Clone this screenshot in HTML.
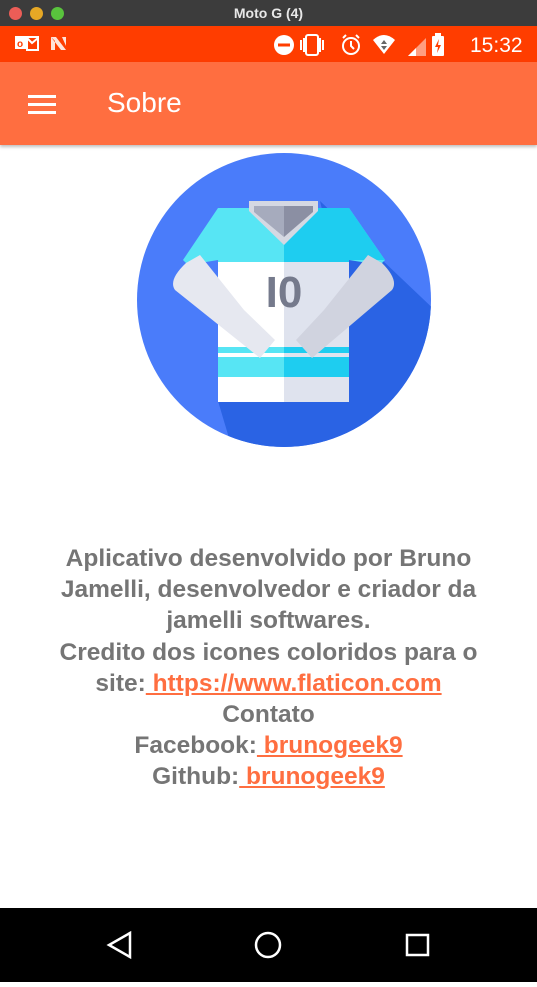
<!DOCTYPE html>
<html><head><meta charset="utf-8"><style>
*{margin:0;padding:0;box-sizing:border-box}
body{width:537px;height:982px;overflow:hidden;background:#fff;font-family:"Liberation Sans",sans-serif;position:relative}
.title{position:absolute;top:0;left:0;width:537px;height:26px;background:#3c3c3c;color:#e8e8e8;font-weight:bold;font-size:14px;text-align:center;line-height:26px}
.dot{position:absolute;top:7px;width:13px;height:13px;border-radius:50%}
.status{position:absolute;top:26px;left:0;width:537px;height:36px;background:#ff3d00;color:#fff}
.bar{position:absolute;top:62px;left:0;width:537px;height:83px;background:#ff6e40;box-shadow:0 2px 3px rgba(0,0,0,.25)}
.txt{position:absolute;top:543px;left:0;width:537px;text-align:center;font-weight:bold;font-size:24.5px;line-height:31.2px;color:#757575}
.txt a{color:#ff6e40;text-decoration:underline}
.nav{position:absolute;top:908px;left:0;width:537px;height:74px;background:#000}
</style></head><body>
<div class="title">Moto G (4)</div>
<div class="dot" style="left:9px;background:#ec5d57"></div>
<div class="dot" style="left:30px;background:#e6a825"></div>
<div class="dot" style="left:51px;background:#59c33d"></div>
<div class="status">
<svg width="537" height="36" style="position:absolute;left:0;top:0">
<rect x="15" y="10" width="12" height="13" fill="#fff"/><text x="17" y="21" font-size="10" font-weight="bold" fill="#ff3d00" font-family="Liberation Sans">o</text><path d="M27 11 L38 11 L38 24 L27 24 Z" fill="none" stroke="#fff" stroke-width="2"/><path d="M27 12 L32 17 L38 12" stroke="#fff" stroke-width="2" fill="none"/>
<path d="M51 11 L56 11 L66 24 L61 24 Z M51 11 L51 24 L55 24 L55 15 Z M62 11 L66 11 L66 20 Z" fill="#fff" opacity=".85"/>
<circle cx="284" cy="19" r="10" fill="#fff"/><rect x="278" y="17.5" width="12" height="3" fill="#ff3d00"/>
<rect x="306" y="9" width="12" height="20" rx="2" fill="none" stroke="#fff" stroke-width="2"/><path d="M301 14v10M304 12v14M320 12v14M323 14v10" stroke="#fff" stroke-width="2"/>
<circle cx="351" cy="20" r="8" fill="none" stroke="#fff" stroke-width="2"/><path d="M351 15v5l3 3M343 12l3-3M359 12l-3-3" stroke="#fff" stroke-width="2" fill="none"/>
<path d="M373 14 Q384 4 395 14 L384 28 Z" fill="#fff"/><path d="M381 18l3-4 3 4zM381 20h6l-3 4z" fill="#666"/>
<path d="M408 30 L426 12 L426 30 Z" fill="#fff" opacity=".5"/><path d="M408 30 L416 22 L416 30 Z" fill="#fff"/>
<rect x="432" y="10" width="12" height="20" rx="1" fill="#fff"/><rect x="435" y="7" width="6" height="3" fill="#fff"/><path d="M439 13 L435 21 L438 21 L437 27 L441 19 L438 19 Z" fill="#ff3d00"/>
<text x="470" y="26" font-size="21" fill="#fff" font-family="Liberation Sans">15:32</text>
</svg></div>
<div class="bar">
<div style="position:absolute;left:28px;top:33px;width:28px;height:3px;background:#fff"></div>
<div style="position:absolute;left:28px;top:41px;width:28px;height:3px;background:#fff"></div>
<div style="position:absolute;left:28px;top:49px;width:28px;height:3px;background:#fff"></div>
<div style="position:absolute;left:107px;top:25px;color:#fff;font-size:28px">Sobre</div>
</div>
<svg width="537" height="320" style="position:absolute;left:0;top:145px">
<defs><clipPath id="c"><circle cx="284" cy="155" r="147"/></clipPath></defs>
<circle cx="284" cy="155" r="147" fill="#4a7cfa"/>
<g clip-path="url(#c)"><path d="M320 56 L440 170 L440 330 L240 330 L218 256 L349 256 L349 180 Z" fill="#2a63e4"/></g>
<path d="M218 63 L349 63 L385 115 L380 120 L349 115 L349 257 L218 257 L218 115 L188 120 L183 115 Z" fill="#57e5f4"/>
<path d="M284 63 L349 63 L385 115 L349 115 L349 257 L284 257 Z" fill="#1ecdf0"/>
<rect x="218" y="117" width="66" height="140" fill="#fff"/><rect x="284" y="117" width="65" height="140" fill="#dfe3ee"/>
<rect x="218" y="202" width="131" height="6" fill="#57e5f4"/><rect x="218" y="212" width="131" height="20" fill="#57e5f4"/>
<rect x="284" y="202" width="65" height="6" fill="#1ecdf0"/><rect x="284" y="212" width="65" height="20" fill="#1ecdf0"/>
<path d="M249 56 L318 56 L318 66 L284 100 L249 66 Z" fill="#d5d8e2"/>
<path d="M254 61 L284 61 L284 92 L254 67 Z" fill="#a6abbd"/><path d="M284 61 L313 61 L313 67 L284 92 Z" fill="#8b8fa3"/>
<path d="M186 118 L200 110 L244 165 L275 195 L260 213 L175 145 Q168 135 186 118 Z" fill="#e6e8f0"/>
<path d="M382 118 L368 110 L324 165 L296 195 L312 213 L392 145 Q399 135 382 118 Z" fill="#d0d3df"/>
<text x="284" y="162" text-anchor="middle" font-size="44" font-weight="bold" fill="#757a8c" font-family="Liberation Sans">I0</text>
</svg>
<div class="txt">Aplicativo desenvolvido por Bruno<br>Jamelli, desenvolvedor e criador da<br>jamelli softwares.<br>Credito dos icones coloridos para o<br>site:<a> https://www.flaticon.com</a><br>Contato<br>Facebook:<a> brunogeek9</a><br>Github:<a> brunogeek9</a></div>
<div class="nav"><svg width="537" height="74">
<path d="M130 25 L109 37 L130 49 Z" fill="none" stroke="#fff" stroke-width="2.5"/>
<circle cx="268" cy="37" r="12" fill="none" stroke="#fff" stroke-width="2.5"/>
<rect x="407" y="27" width="21" height="20" fill="none" stroke="#fff" stroke-width="2.5"/>
</svg></div>
</body></html>
